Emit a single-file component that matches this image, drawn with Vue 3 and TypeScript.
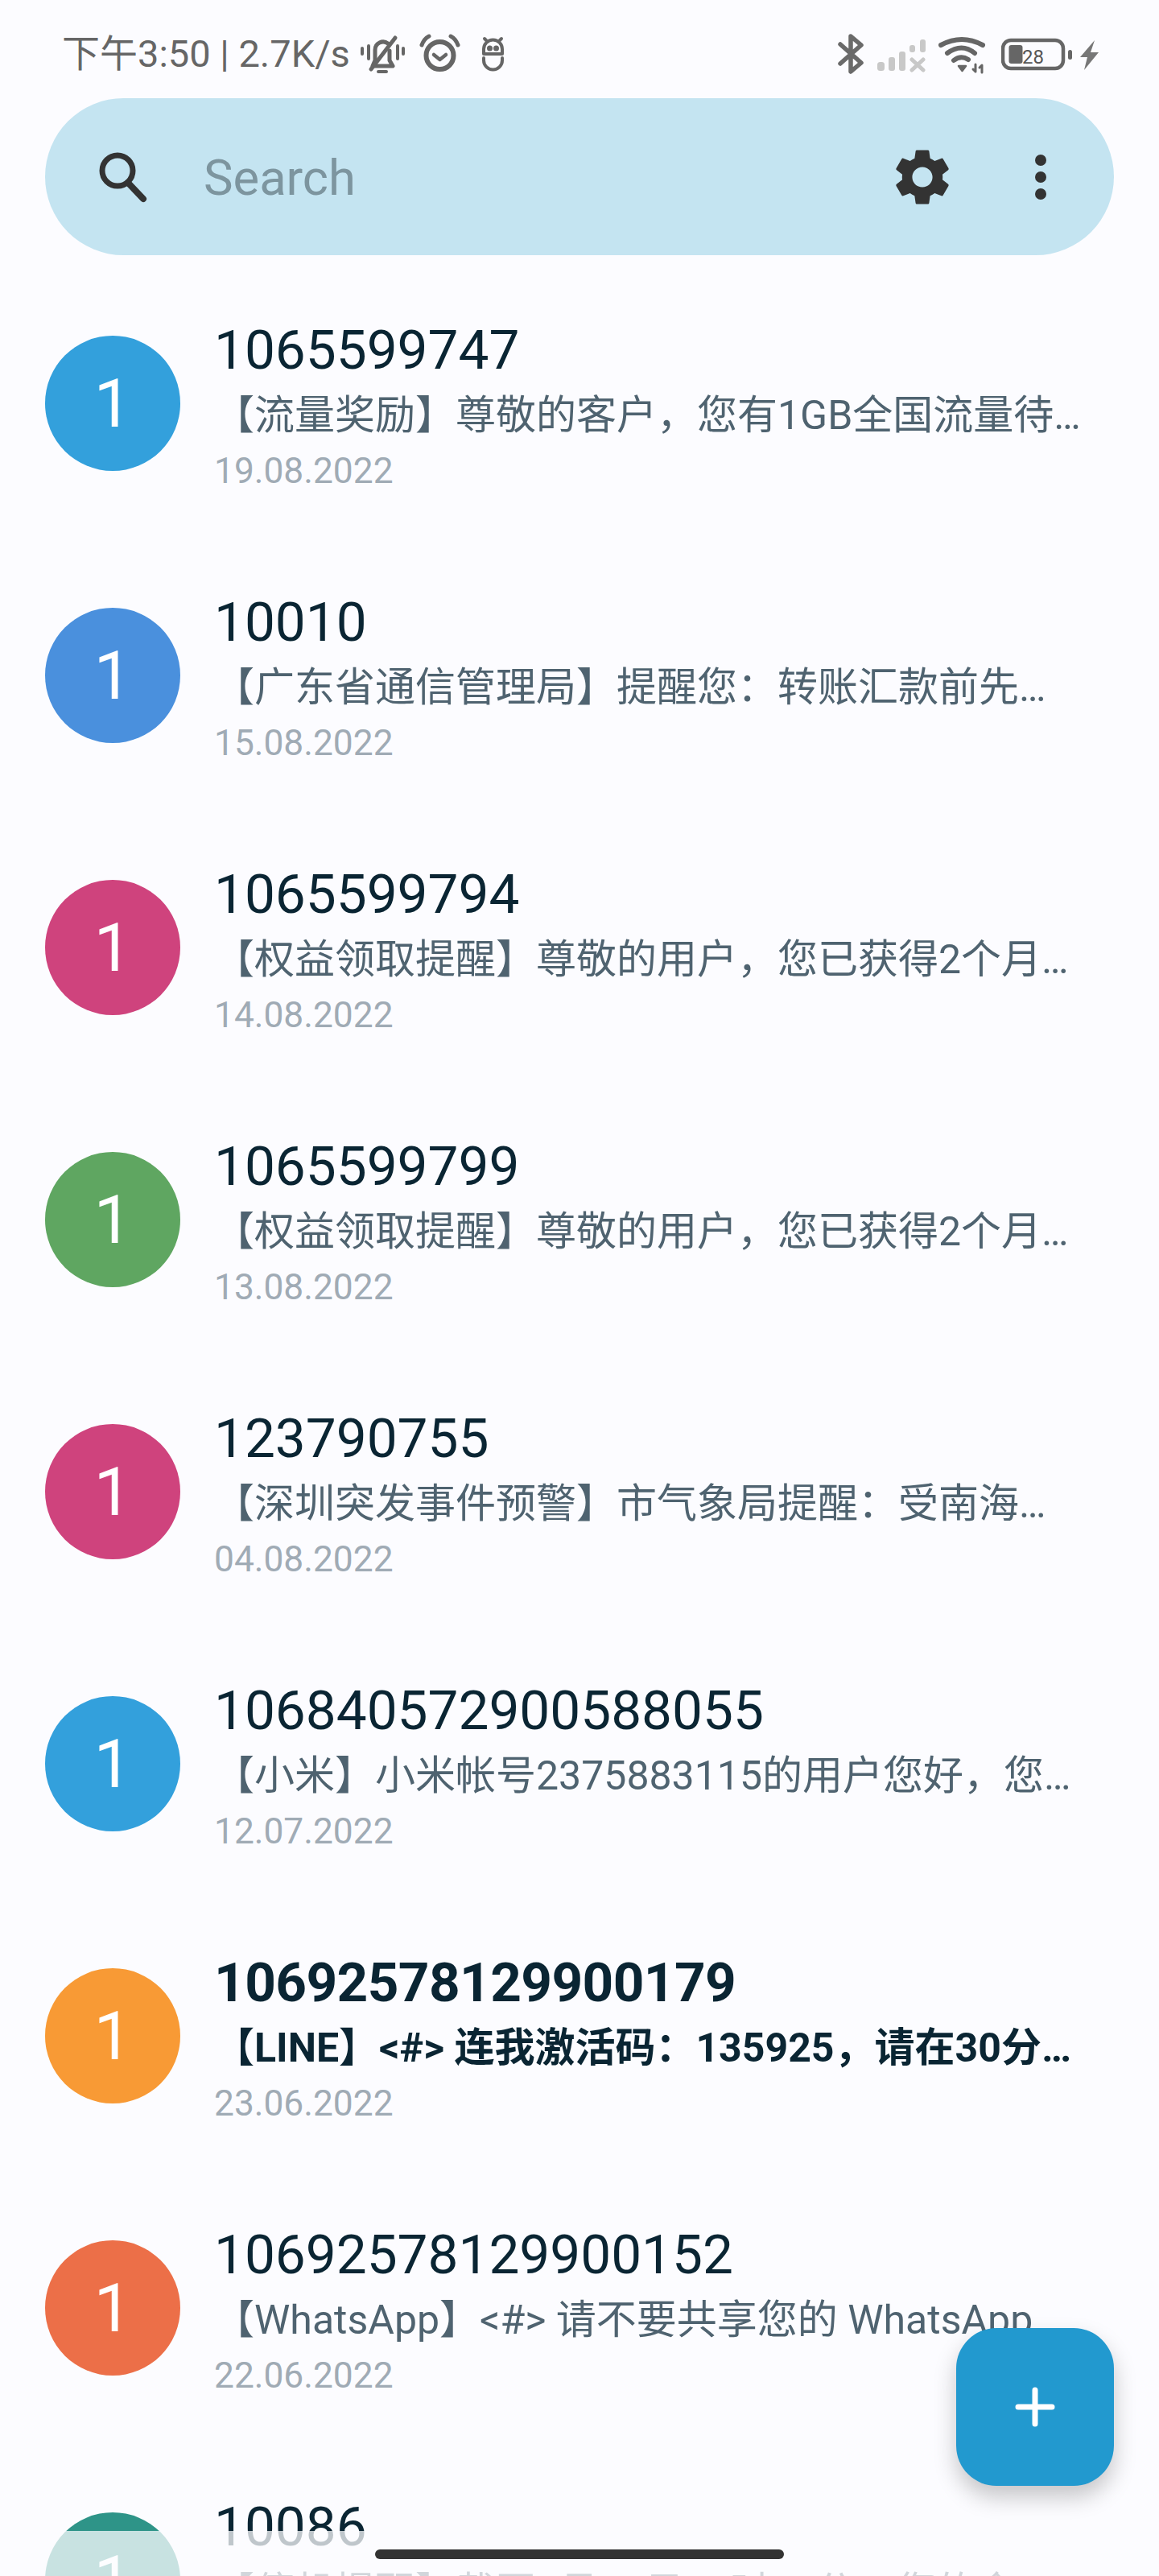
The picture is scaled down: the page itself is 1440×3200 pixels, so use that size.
<template>
  <div class="screen">
    <div class="status-bar">
      <span class="status-text">下午3:50 | 2.7K/s</span>
      <svg class="ic-bell" width="56" height="50" viewBox="0 0 56 50" fill="none" stroke="#666" stroke-linecap="round" stroke-linejoin="round">
        <path d="M3 18v7M11 15v16M47 15v16M54 18v7" stroke-width="4" />
        <path d="M16 40l3-7V20a10 10 0 0 1 16-8M37 21v12l4 7H16" stroke-width="5" />
        <path d="M44 5L14 44" stroke-width="5" />
        <path d="M23 47h10" stroke-width="4" />
      </svg>
      <svg class="ic-alarm" width="51" height="50" viewBox="0 0 51 50" fill="none" stroke="#666" stroke-linecap="round" stroke-linejoin="round">
        <circle cx="25.5" cy="27" r="17" stroke-width="6" />
        <path d="M18 26l7.500 6 7.500-6" stroke-width="4.500" />
        <path d="M3 14q3-8 9-11M48 14q-3-8-9-11" stroke-width="5" />
      </svg>
      <svg class="ic-robot" width="29" height="50" viewBox="0 0 29 50" fill="none" stroke="#666" stroke-linecap="round" stroke-linejoin="round" stroke-width="4">
        <path d="M3 25V19a11.500 11.500 0 0 1 23 0v6H3zM3 30v3a11.500 11.500 0 0 0 23 0v-3" />
        <path d="M6 8L4 6M23 8l2-2" />
        <circle cx="10.500" cy="18" r="1.500" fill="#666" />
        <circle cx="18.500" cy="18" r="1.500" fill="#666" />
      </svg>
      <div class="status-right">
        <svg width="32" height="50" viewBox="0 0 32 50" fill="none" stroke="#6a6a6a" stroke-width="5.500" stroke-linecap="round" stroke-linejoin="round">
          <path d="M3 13l26 23-13 11V3l13 11L3 37" />
        </svg>
        <svg class="ic-signal" width="60" height="50" viewBox="0 0 60 50" fill="#c8c8c8">
          <rect x="0" y="35" width="9" height="11" rx="3.500" />
          <rect x="14" y="29" width="8" height="17" rx="3" />
          <rect x="27" y="22" width="8" height="24" rx="3" />
          <rect x="40" y="14" width="7" height="9" rx="3" />
          <rect x="53" y="7" width="7" height="16" rx="3" />
          <path d="M43 32l14 13M57 32L43 45" stroke="#c8c8c8" stroke-width="5" stroke-linecap="round" />
        </svg>
        <svg class="ic-wifi" width="59" height="50" viewBox="0 0 59 50" fill="none" stroke="#666" stroke-linecap="round">
          <path d="M3 14Q29 0 55 14" stroke-width="6" />
          <path d="M11 24Q29 11 45 24" stroke-width="6" />
          <path d="M19 33Q28 26 37 32" stroke-width="6" />
          <path d="M25 40h9l-4.500 6z" fill="#666" stroke-width="2.500" stroke-linejoin="round" />
          <path d="M46 38v9M43 44l3 3M54 48v-9M51 42l3-3" stroke-width="3" />
        </svg>
        <svg class="ic-battery" width="88" height="50" viewBox="0 0 88 50" fill="none">
          <rect x="2" y="8" width="75" height="35" rx="10" stroke="#666" stroke-width="4.500" />
          <rect x="9.500" y="14" width="17" height="23" rx="3" fill="#666" />
          <text x="26" y="37" class="battery-num">28</text>
          <rect x="83" y="20" width="5" height="12" rx="2.500" fill="#666" />
        </svg>
        <svg class="ic-bolt" width="24" height="50" viewBox="0 0 24 50" fill="#777">
          <path d="M19 8L1 29h9L6 45l18-22h-10z" />
        </svg>
      </div>
    </div>

    <div class="search-bar">
      <svg class="search-icon" width="64" height="64" viewBox="0 0 64 64" fill="none" stroke="#333" stroke-linecap="round">
        <circle cx="25" cy="24" r="19" stroke-width="7" />
        <path d="M38 39l19 20" stroke-width="8" />
      </svg>
      <span class="search-placeholder">Search</span>
      <svg class="gear" width="84" height="84" viewBox="0 0 24 24" fill="#333">
        <path fill-rule="evenodd" d="M19.14 12.94c.04-.3.06-.61.06-.94 0-.32-.02-.64-.07-.94l2.03-1.58c.18-.14.23-.41.12-.61l-1.920-3.320c-.12-.22-.37-.29-.59-.22l-2.390.96c-.5-.38-1.030-.7-1.620-.94l-.36-2.540c-.04-.24-.24-.41-.48-.41h-3.840c-.24 0-.43.17-.47.41l-.36 2.540c-.59.24-1.130.57-1.620.94l-2.390-.96c-.22-.08-.47 0-.59.22L2.740 8.870c-.12.21-.08.47.12.61l2.030 1.580c-.05.3-.09.63-.09.94s.02.64.07.94l-2.030 1.580c-.18.14-.23.41-.12.61l1.920 3.320c.12.22.37.29.59.22l2.390-.96c.5.38 1.030.7 1.620.94l.36 2.540c.05.24.24.41.48.41h3.840c.24 0 .44-.17.47-.41l.36-2.540c.59-.24 1.130-.56 1.620-.94l2.390.96c.22.08.47 0 .59-.22l1.920-3.320c.12-.22.07-.47-.12-.61l-2.010-1.580zM12 15.600c-1.980 0-3.600-1.620-3.600-3.600s1.620-3.600 3.600-3.600 3.600 1.620 3.600 3.600-1.620 3.600-3.600 3.600z" />
      </svg>
      <div class="more">
        <i></i><i></i><i></i>
      </div>
    </div>

    <ul class="list">
      <li v-for="row in rows" :key="row.title" class="row" :class="{ unread: row.unread }">
        <div class="avatar" :style="{ backgroundColor: row.color }">1</div>
        <div class="info">
          <div class="title">{{ row.title }}</div>
          <div class="message">{{ row.message }}</div>
          <div class="date">{{ row.date }}</div>
        </div>
      </li>
    </ul>

    <div class="nav-scrim">
      <div class="home-bar"></div>
    </div>

    <button type="button" class="fab">
      <svg width="50" height="50" viewBox="0 0 50 50" fill="none" stroke="#fff" stroke-width="7" stroke-linecap="round">
        <path d="M25 4v42M4 25h42" />
      </svg>
    </button>
  </div>
</template>

<script setup lang="ts">
interface Row {
  title: string;
  message: string;
  date: string;
  color: string;
  unread?: boolean;
}

const rows: Row[] = [
  { title: '1065599747', message: '【流量奖励】尊敬的客户，您有1GB全国流量待…', date: '19.08.2022', color: '#33a0dc' },
  { title: '10010', message: '【广东省通信管理局】提醒您：转账汇款前先…', date: '15.08.2022', color: '#4a90dd' },
  { title: '1065599794', message: '【权益领取提醒】尊敬的用户，您已获得2个月…', date: '14.08.2022', color: '#cf437d' },
  { title: '1065599799', message: '【权益领取提醒】尊敬的用户，您已获得2个月…', date: '13.08.2022', color: '#5fa661' },
  { title: '123790755', message: '【深圳突发事件预警】市气象局提醒：受南海…', date: '04.08.2022', color: '#cf437d' },
  { title: '106840572900588055', message: '【小米】小米帐号2375883115的用户您好，您…', date: '12.07.2022', color: '#33a0dc' },
  { title: '10692578129900179', message: '【LINE】<#> 连我激活码：135925，请在30分…', date: '23.06.2022', color: '#f89a35', unread: true },
  { title: '10692578129900152', message: '【WhatsApp】<#> 请不要共享您的 WhatsApp…', date: '22.06.2022', color: '#ec6f48' },
  { title: '10086', message: '【停机提醒】截至8月15日08时30分，您的余…', date: '20.06.2022', color: '#2e9488' }
];
</script>

<style>
body {
  background-color: #fcfcff;
}
</style>

<style scoped>
.screen {
  position: relative;
  height: 3200px;
  overflow: hidden;
  background-color: #fcfcff;
  font-family: Roboto, "Noto Sans CJK SC", sans-serif;
}

.status-bar {
  display: flex;
  align-items: flex-start;
  box-sizing: border-box;
  height: 122px;
  padding: 42px 75px 0 77px;
}

.status-text {
  margin-right: 12px;
  font-size: 47px;
  line-height: 50px;
  color: #666;
  white-space: nowrap;
}

.ic-alarm {
  margin-left: 18px;
}

.ic-robot {
  margin-left: 26px;
}

.status-right {
  display: flex;
  margin-left: auto;
}

.ic-signal {
  margin-left: 17px;
}

.ic-wifi {
  margin-left: 16px;
}

.ic-battery {
  margin-left: 19px;
}

.ic-bolt {
  margin-left: 9px;
}

.battery-num {
  font-family: Roboto, sans-serif;
  font-size: 24px;
  fill: #555;
}

.search-bar {
  display: flex;
  align-items: center;
  height: 195px;
  margin: 0 56px;
  border-radius: 98px;
  background-color: #c4e4f1;
}

.search-icon {
  margin-left: 65px;
}

.search-placeholder {
  margin-left: 68px;
  padding-top: 2px;
  font-size: 61.5px;
  color: #7d959f;
}

.gear {
  margin-left: auto;
}

.more {
  display: flex;
  flex-direction: column;
  gap: 7px;
  margin: 0 84px 0 98px;
}

.more i {
  display: block;
  width: 14px;
  height: 14px;
  border-radius: 50%;
  background-color: #333;
}

.list {
  list-style: none;
  margin: 15px 0 0;
  padding: 0;
}

.row {
  display: flex;
  align-items: center;
  gap: 42px;
  height: 338px;
  padding: 0 56px;
}

.avatar {
  display: flex;
  flex: none;
  align-items: center;
  justify-content: center;
  width: 168px;
  height: 168px;
  border-radius: 50%;
  font-size: 84px;
  color: #fff;
}

.info {
  min-width: 0;
  padding-top: 16px;
  white-space: nowrap;
}

.title {
  margin-bottom: 10px;
  font-size: 67.5px;
  line-height: 72px;
  color: #0a2533;
}

.message {
  font-size: 50px;
  line-height: 70px;
  color: #4f6370;
}

.date {
  font-size: 44.3px;
  line-height: 68px;
  color: #a0abb5;
}

.unread .title {
  letter-spacing: -0.6px;
}

.unread .title,
.unread .message {
  font-weight: 700;
  color: #0a2533;
}

.nav-scrim {
  position: absolute;
  left: 0;
  right: 0;
  top: 3144px;
  bottom: 0;
  background-color: rgba(252, 252, 255, 0.75);
}

.home-bar {
  position: absolute;
  left: 466px;
  top: 23px;
  width: 508px;
  height: 12px;
  border-radius: 6px;
  background-color: #333;
}

.fab {
  position: absolute;
  left: 1188px;
  top: 2892px;
  display: flex;
  align-items: center;
  justify-content: center;
  width: 196px;
  height: 196px;
  padding: 0;
  border: none;
  border-radius: 50px;
  background-color: #2299cf;
  box-shadow: 0 14px 28px rgba(0, 0, 0, 0.22);
}
</style>
